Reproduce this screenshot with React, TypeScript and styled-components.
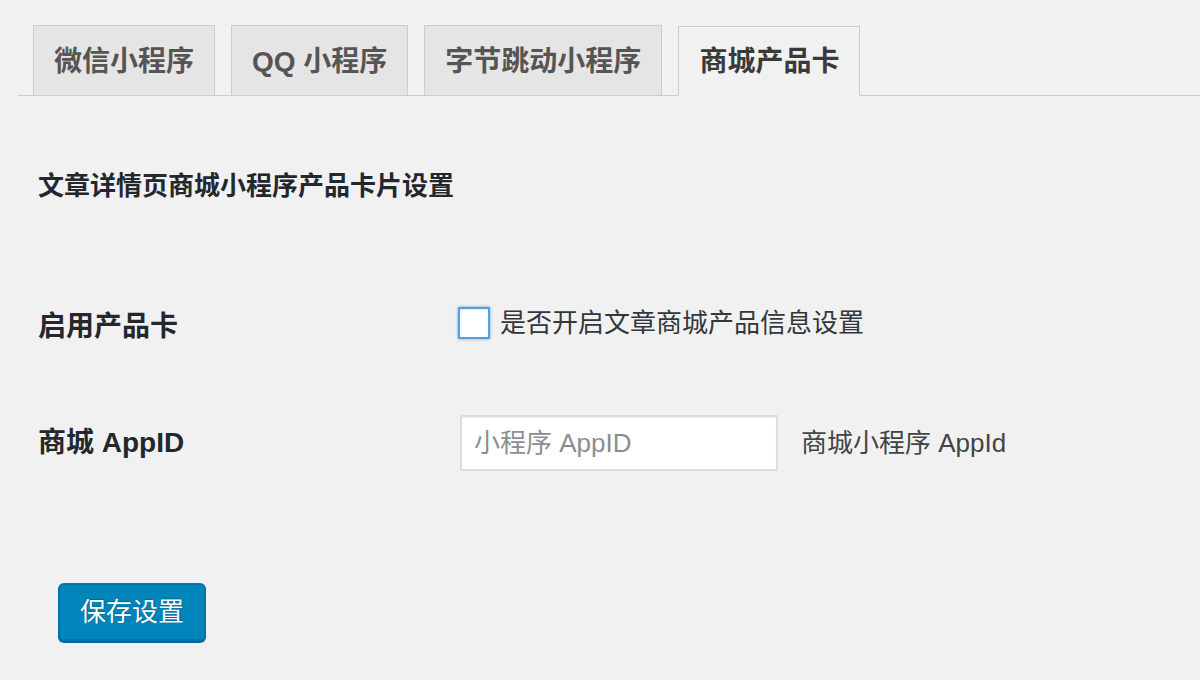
import React from "react";
import styled, { createGlobalStyle } from "styled-components";

const Global = createGlobalStyle`
  html, body { margin: 0; padding: 0; background: #f1f1f1; }
  body {
    font-family: "Liberation Sans", "Noto Sans CJK SC", sans-serif;
    color: #23282d;
    width: 1200px;
    height: 680px;
    overflow: hidden;
  }
`;

const Wrap = styled.div`
  margin-left: 18px;
  display: flex;
  flex-direction: column;
`;

const TabBar = styled.nav`
  display: flex;
  gap: 16px;
  padding: 25px 0 0 15px;
  border-bottom: 1px solid #ccc;
`;

const Tab = styled.a<{ $active?: boolean }>`
  display: block;
  box-sizing: border-box;
  height: 71px;
  padding: 12px 20px 8px;
  margin-bottom: -1px;
  border: 1px solid #ccc;
  border-bottom: ${(p) => (p.$active ? "1px solid #f1f1f1" : "1px solid #ccc")};
  background: ${(p) => (p.$active ? "#f1f1f1" : "#e5e5e5")};
  color: ${(p) => (p.$active ? "#3a3a3a" : "#555")};
  font-size: 28px;
  font-weight: 700;
  line-height: 48px;
  text-decoration: none;
  white-space: nowrap;
  ${(p) => (p.$active ? "margin-top: 1px; height: 70px; padding-top: 11px;" : "")}
`;

const Heading = styled.h2`
  margin: 72px 0 0 20px;
  font-size: 26px;
  line-height: 36px;
  font-weight: 700;
  color: #23282d;
`;

const Table = styled.div`
  margin-top: 62px;
  display: flex;
  flex-direction: column;
`;

const Row = styled.div`
  display: grid;
  grid-template-columns: 440px 1fr;
  align-items: center;
  height: 118px;
`;

const Label = styled.div<{ $dy?: number }>`
  padding-left: 20px;
  font-size: 28px;
  font-weight: 700;
  line-height: 40px;
  color: #23282d;
  margin-top: ${(p) => p.$dy ?? 0}px;
`;

const Field = styled.div<{ $dy?: number }>`
  display: flex;
  align-items: center;
  margin-top: ${(p) => p.$dy ?? 0}px;
`;

const Check = styled.span`
  display: block;
  box-sizing: border-box;
  width: 32px;
  height: 32px;
  background: #fff;
  border: 2px solid #5b9dd9;
  border-radius: 1px;
  box-shadow: 0 0 3px rgba(30, 140, 190, 0.7), inset 0 1px 2px rgba(0, 0, 0, 0.1);
`;

const CheckText = styled.span`
  margin-left: 10px;
  font-size: 26px;
  line-height: 36px;
  color: #32373c;
`;

const Input = styled.input`
  box-sizing: border-box;
  margin: 0 0 0 2px;
  width: 318px;
  height: 56px;
  padding: 0 12px;
  background: #fff;
  border: 2px solid #ddd;
  box-shadow: inset 0 1px 2px rgba(0, 0, 0, 0.07);
  font-family: "Liberation Sans", "Noto Sans CJK SC", sans-serif;
  font-size: 26px;
  color: #32373c;
  outline: none;
  &::placeholder { color: #8a8e92; }
`;

const Desc = styled.span`
  margin-left: 23px;
  font-size: 26px;
  line-height: 36px;
  color: #444;
`;

const Button = styled.button`
  align-self: flex-start;
  margin: 81px 0 0 40px;
  box-sizing: border-box;
  height: 58px;
  padding: 0 20px;
  background: #0085ba;
  border: 2px solid #0073aa;
  border-radius: 6px;
  box-shadow: 0 2px 0 #006799;
  color: #fff;
  font-family: "Liberation Sans", "Noto Sans CJK SC", sans-serif;
  font-size: 26px;
  line-height: 50px;
  text-shadow: 0 -1px 1px #006799, 1px 0 1px #006799;
`;

export default function App() {
  return (
    <>
      <Global />
      <Wrap>
        <TabBar>
          <Tab>微信小程序</Tab>
          <Tab>QQ 小程序</Tab>
          <Tab>字节跳动小程序</Tab>
          <Tab $active>商城产品卡</Tab>
        </TabBar>
        <Heading>文章详情页商城小程序产品卡片设置</Heading>
        <Table>
          <Row>
            <Label $dy={4}>启用产品卡</Label>
            <Field $dy={-4}>
              <Check />
              <CheckText>是否开启文章商城产品信息设置</CheckText>
            </Field>
          </Row>
          <Row>
            <Label>商城 AppID</Label>
            <Field>
              <Input placeholder="小程序 AppID" />
              <Desc>商城小程序 AppId</Desc>
            </Field>
          </Row>
        </Table>
        <Button>保存设置</Button>
      </Wrap>
    </>
  );
}
